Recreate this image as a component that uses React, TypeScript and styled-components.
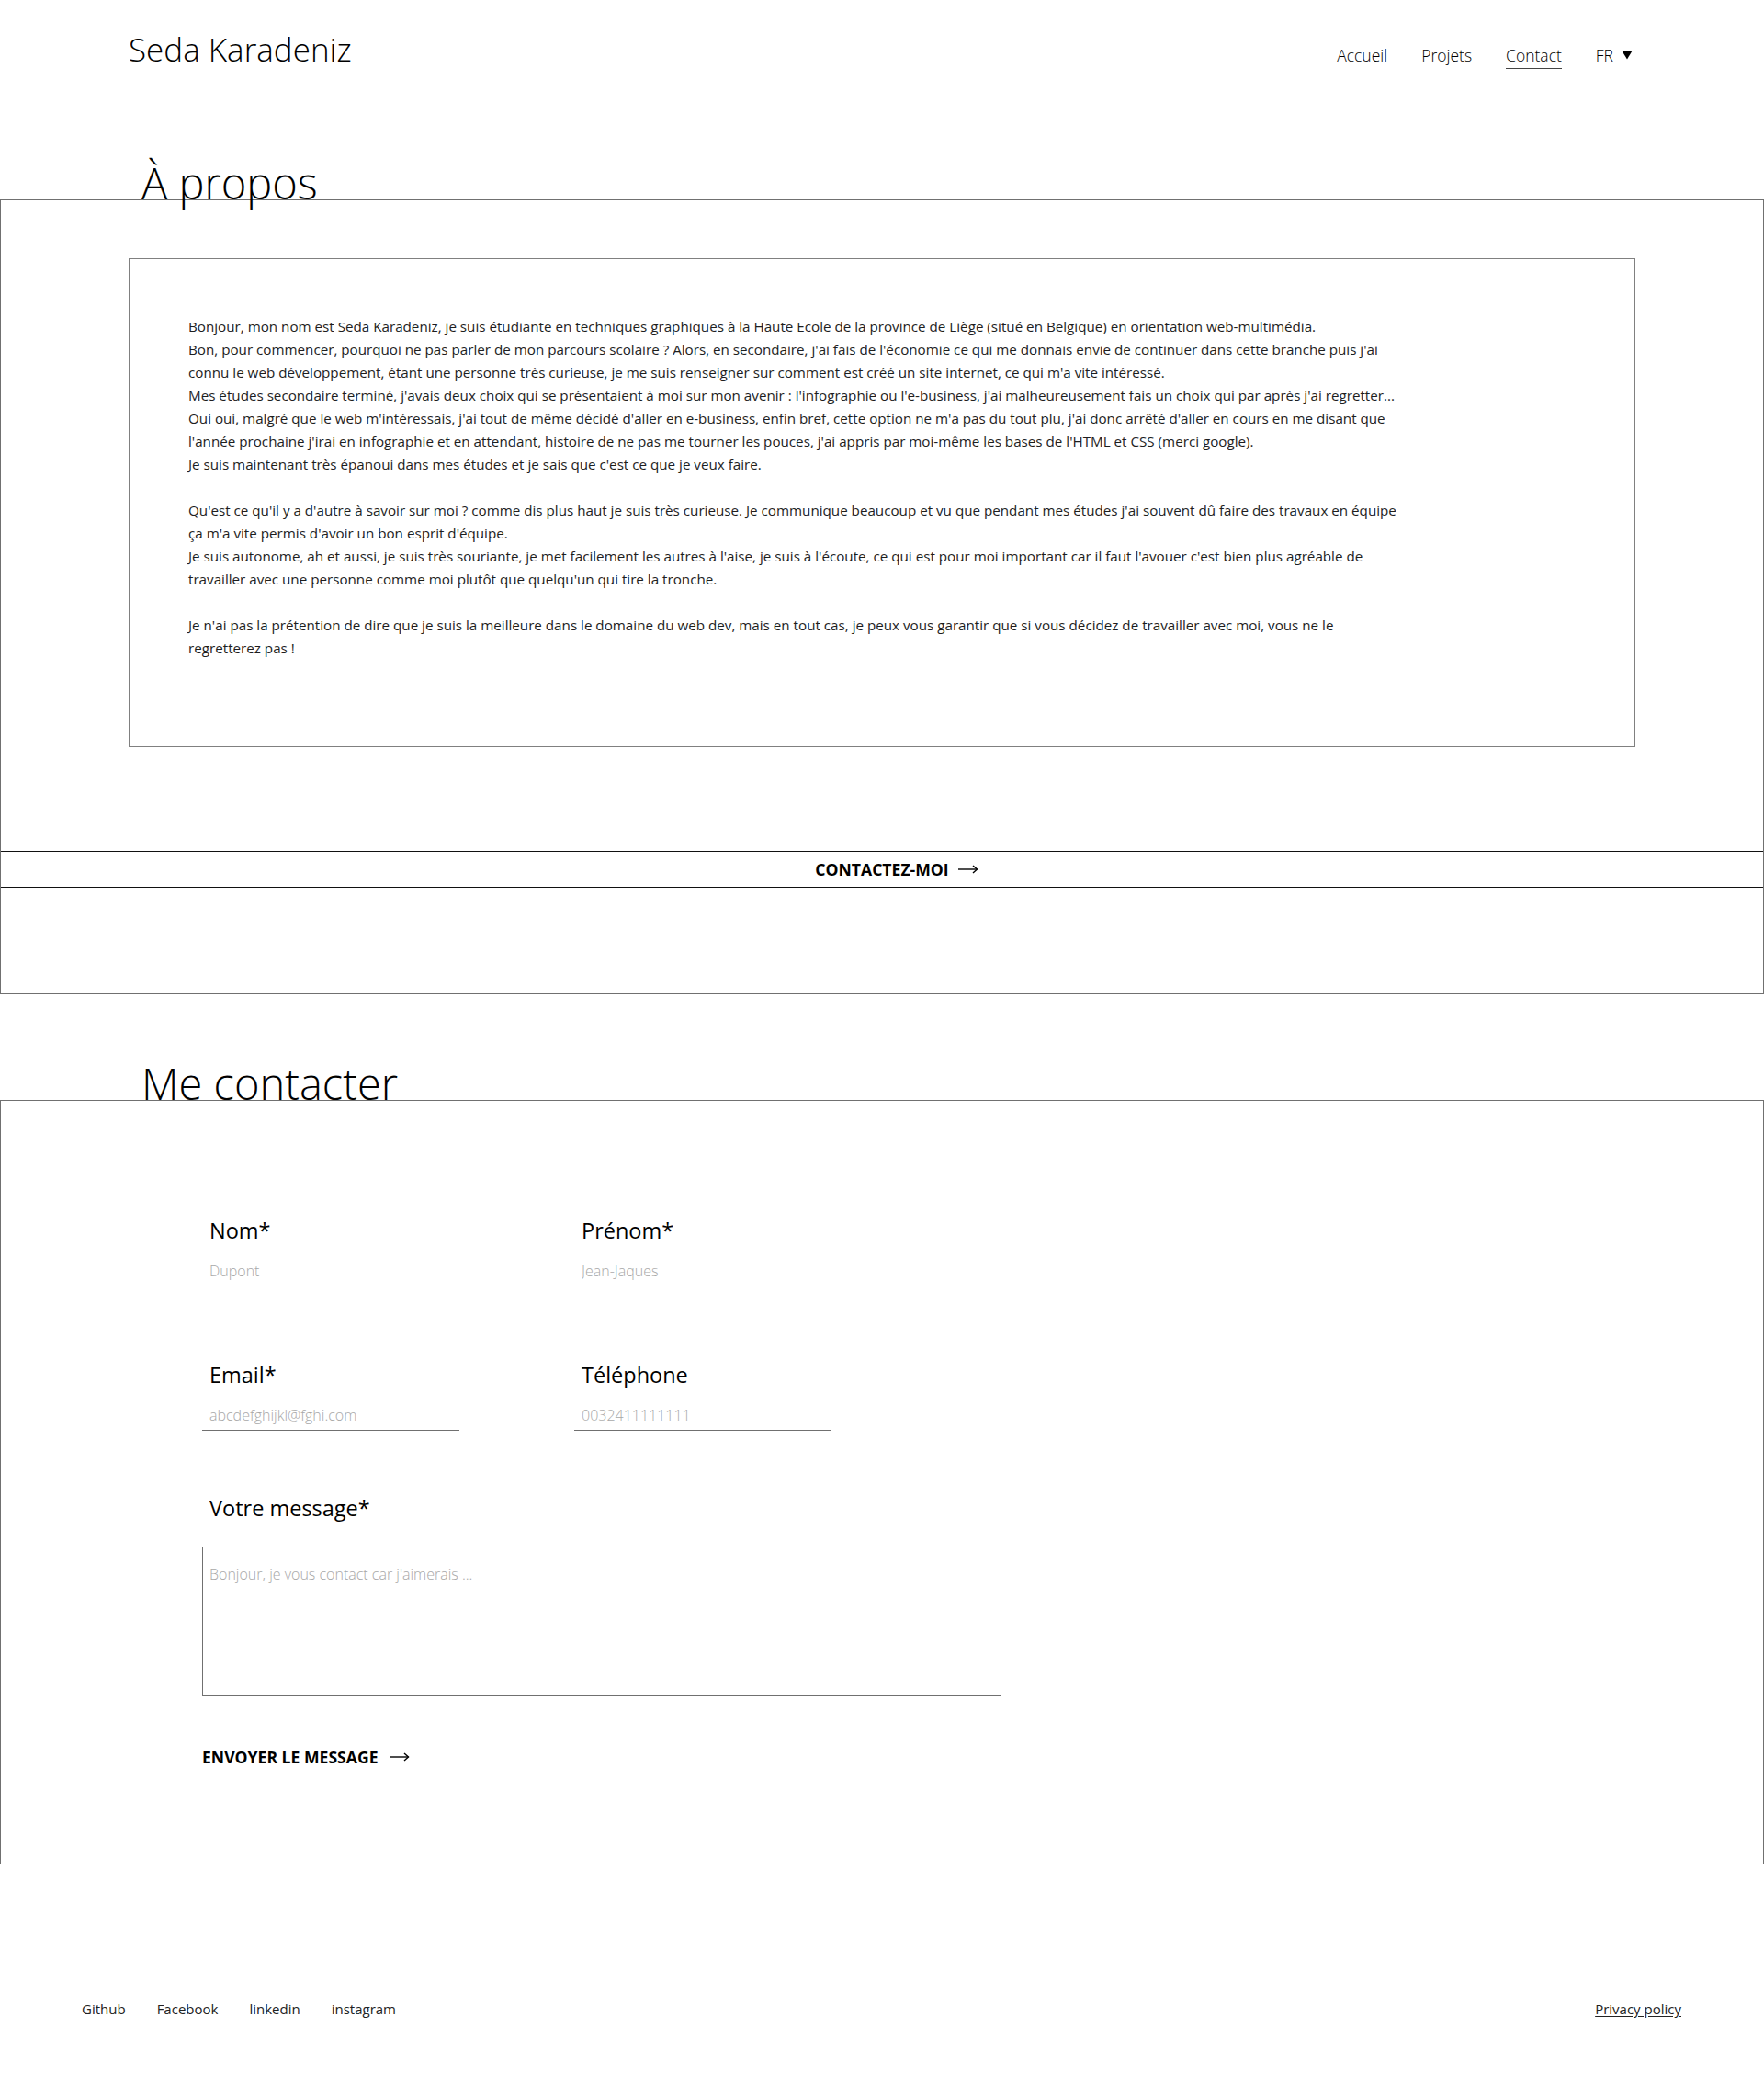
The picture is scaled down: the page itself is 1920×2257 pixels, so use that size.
import React from "react";
import styled, { createGlobalStyle } from "styled-components";

const GlobalStyle = createGlobalStyle`
  * {
    box-sizing: border-box;
  }

  body {
    margin: 0;
    background: #fff;
    color: #1c1c1c;
    font-family: "Open Sans", "Noto Sans", sans-serif;
  }
`;

const Header = styled.header`
  display: flex;
  justify-content: space-between;
  align-items: baseline;
  height: 102px;
  padding: 30px 143px 0 140px;
`;

const Logo = styled.a`
  font-size: 35px;
  font-weight: 300;
  line-height: 1.36;
  color: #000;
  text-decoration: none;
`;

const Nav = styled.nav`
  display: flex;
  align-items: baseline;
  gap: 37px;
`;

const NavLink = styled.a<{ $active?: boolean }>`
  font-size: 17.5px;
  font-weight: 300;
  color: #000;
  text-decoration: none;
  padding-bottom: 2px;
  border-bottom: 1px solid ${({ $active }) => ($active ? "#444" : "transparent")};
`;

const LangSwitch = styled.button`
  display: flex;
  align-items: center;
  gap: 9px;
  padding: 0;
  border: none;
  background: none;
  font-family: inherit;
  font-size: 17.5px;
  font-weight: 300;
  color: #000;
  cursor: pointer;
`;

const SectionTitle = styled.h2`
  margin: 74px 0 -5px;
  padding-left: 154px;
  font-size: 47px;
  font-weight: 300;
  line-height: 46px;
  color: #000;
`;

const Panel = styled.section<{ $pad: string }>`
  border: 1px solid #707070;
  padding: ${({ $pad }) => $pad};
`;

const TextCard = styled.div`
  margin: 0 139px;
  border: 1px solid #808080;
  padding: 61px 64px 94px;
`;

const TextBody = styled.div`
  max-width: 1318px;
  font-size: 15.2px;
  line-height: 25px;
  color: #1e1e1e;

  p {
    margin: 0 0 25px;
  }

  p:last-child {
    margin-bottom: 0;
  }
`;

const CtaBar = styled.a`
  display: flex;
  justify-content: center;
  align-items: center;
  height: 40px;
  margin-top: 113px;
  border-top: 1px solid #111;
  border-bottom: 1px solid #111;
  font-size: 17.6px;
  font-weight: 700;
  color: #000;
  text-decoration: none;
`;

const CtaArrow = styled.span`
  display: flex;
  margin: 0 -32px 0 10px;
`;

const FieldGrid = styled.div`
  display: grid;
  grid-template-columns: 280px 280px;
  column-gap: 125px;
  row-gap: 80px;
`;

const Field = styled.label<{ $top?: number }>`
  display: flex;
  flex-direction: column;
  margin-top: ${({ $top }) => $top ?? 0}px;
`;

const FieldLabel = styled.span`
  padding-left: 8px;
  font-size: 23.5px;
  font-weight: 400;
  line-height: 32px;
  color: #000;
`;

const TextInput = styled.input`
  width: 100%;
  height: 27px;
  margin-top: 18px;
  padding: 0 8px 6px;
  border: none;
  border-bottom: 1px solid #707070;
  background: transparent;
  outline: none;
  font-family: inherit;
  font-size: 16px;
  font-weight: 300;
  color: #222;

  &::placeholder {
    color: #a8a8a8;
  }
`;

const MessageInput = styled.textarea`
  width: 870px;
  height: 163px;
  margin-top: 26px;
  padding: 19px 7px;
  border: 1px solid #707070;
  outline: none;
  resize: none;
  font-family: inherit;
  font-size: 16px;
  font-weight: 300;
  line-height: 20px;
  color: #222;

  &::placeholder {
    color: #a8a8a8;
  }
`;

const SendButton = styled.button`
  display: flex;
  align-items: center;
  gap: 12px;
  height: 24px;
  margin-top: 54px;
  padding: 0;
  border: none;
  background: none;
  font-family: inherit;
  font-size: 17.6px;
  font-weight: 700;
  color: #000;
  cursor: pointer;
`;

const Footer = styled.footer`
  display: flex;
  justify-content: space-between;
  align-items: baseline;
  padding: 147px 90px 62px 89px;
`;

const FooterLinks = styled.div`
  display: flex;
  gap: 34px;
`;

const FooterLink = styled.a<{ $underline?: boolean }>`
  font-size: 15px;
  line-height: 20px;
  color: #222;
  text-decoration: ${({ $underline }) => ($underline ? "underline" : "none")};
  text-underline-offset: 2px;
`;

const Arrow = () => (
  <svg width="22" height="10" viewBox="0 0 22 10" fill="none" stroke="currentColor" strokeWidth="1.4">
    <path d="M0 5H20.5" />
    <path d="M16 1L20.5 5L16 9" />
  </svg>
);

const Caret = () => (
  <svg width="12" height="10" viewBox="0 0 12 10">
    <path d="M0.5 0.5H11.5L6 9.5Z" fill="#000" />
  </svg>
);

const fields = [
  { label: "Nom*", placeholder: "Dupont", type: "text" },
  { label: "Prénom*", placeholder: "Jean-Jaques", type: "text" },
  { label: "Email*", placeholder: "abcdefghijkl@fghi.com", type: "email" },
  { label: "Téléphone", placeholder: "0032411111111", type: "tel" },
];

const App = () => {
  return (
    <>
      <GlobalStyle />
      <Header>
        <Logo href="#">Seda Karadeniz</Logo>
        <Nav>
          <NavLink href="#">Accueil</NavLink>
          <NavLink href="#">Projets</NavLink>
          <NavLink href="#" $active>
            Contact
          </NavLink>
          <LangSwitch>
            FR <Caret />
          </LangSwitch>
        </Nav>
      </Header>

      <SectionTitle>À propos</SectionTitle>
      <Panel $pad="63px 0 115px">
        <TextCard>
          <TextBody>
            <p>
              Bonjour, mon nom est Seda Karadeniz, je suis étudiante en techniques graphiques à la Haute Ecole de la
              province de Liège (situé en Belgique) en orientation web-multimédia.
              <br />
              Bon, pour commencer, pourquoi ne pas parler de mon parcours scolaire ? Alors, en secondaire, j'ai fais de
              l'économie ce qui me donnais envie de continuer dans cette branche puis j'ai connu le web développement,
              étant une personne très curieuse, je me suis renseigner sur comment est créé un site internet, ce qui m'a
              vite intéressé.
              <br />
              Mes études secondaire terminé, j'avais deux choix qui se présentaient à moi sur mon avenir : l'infographie
              ou l'e-business, j'ai malheureusement fais un choix qui par après j'ai regretter...
              <br />
              Oui oui, malgré que le web m'intéressais, j'ai tout de même décidé d'aller en e-business, enfin bref, cette
              option ne m'a pas du tout plu, j'ai donc arrêté d'aller en cours en me disant que l'année prochaine j'irai
              en infographie et en attendant, histoire de ne pas me tourner les pouces, j'ai appris par moi-même les bases
              de l'HTML et CSS (merci google).
              <br />
              Je suis maintenant très épanoui dans mes études et je sais que c'est ce que je veux faire.
            </p>
            <p>
              Qu'est ce qu'il y a d'autre à savoir sur moi ? comme dis plus haut je suis très curieuse. Je communique
              beaucoup et vu que pendant mes études j'ai souvent dû faire des travaux en équipe ça m'a vite permis d'avoir
              un bon esprit d'équipe.
              <br />
              Je suis autonome, ah et aussi, je suis très souriante, je met facilement les autres à l'aise, je suis à
              l'écoute, ce qui est pour moi important car il faut l'avouer c'est bien plus agréable de travailler avec une
              personne comme moi plutôt que quelqu'un qui tire la tronche.
            </p>
            <p>
              Je n'ai pas la prétention de dire que je suis la meilleure dans le domaine du web dev, mais en tout cas, je
              peux vous garantir que si vous décidez de travailler avec moi, vous ne le regretterez pas !
            </p>
          </TextBody>
        </TextCard>
        <CtaBar href="#">
          CONTACTEZ-MOI
          <CtaArrow>
            <Arrow />
          </CtaArrow>
        </CtaBar>
      </Panel>

      <SectionTitle>Me contacter</SectionTitle>
      <Panel $pad="125px 0 104px 219px">
        <form onSubmit={e => e.preventDefault()}>
          <FieldGrid>
            {fields.map(f => (
              <Field key={f.label}>
                <FieldLabel>{f.label}</FieldLabel>
                <TextInput type={f.type} placeholder={f.placeholder} />
              </Field>
            ))}
          </FieldGrid>
          <Field $top={68}>
            <FieldLabel>Votre message*</FieldLabel>
            <MessageInput placeholder="Bonjour, je vous contact car j'aimerais ..." />
          </Field>
          <SendButton type="submit">
            ENVOYER LE MESSAGE
            <Arrow />
          </SendButton>
        </form>
      </Panel>

      <Footer>
        <FooterLinks>
          <FooterLink href="#">Github</FooterLink>
          <FooterLink href="#">Facebook</FooterLink>
          <FooterLink href="#">linkedin</FooterLink>
          <FooterLink href="#">instagram</FooterLink>
        </FooterLinks>
        <FooterLink href="#" $underline>
          Privacy policy
        </FooterLink>
      </Footer>
    </>
  );
};

export default App;
